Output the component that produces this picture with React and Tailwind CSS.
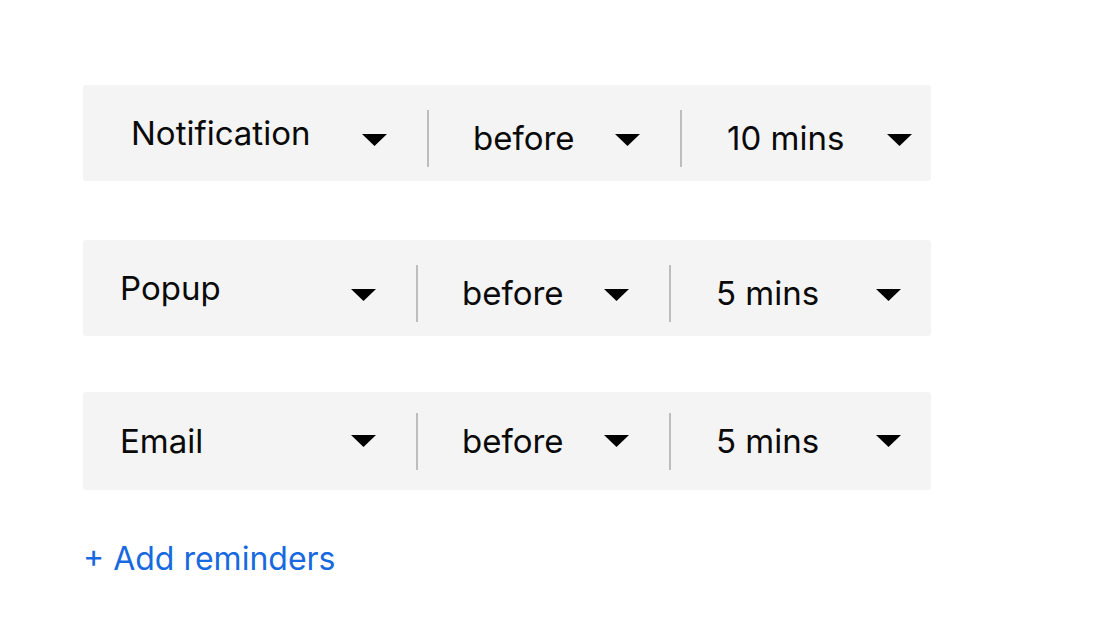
const rows = [
  { type: "Notification", when: "before", time: "10 mins", first: true },
  { type: "Popup", when: "before", time: "5 mins" },
  { type: "Email", when: "before", time: "5 mins", flat: true },
];

const Caret = ({ flat }) => (
  <svg width="25" height="12" viewBox="0 0 25 12" className={`shrink-0 ${flat ? "" : "mt-[4px]"}`}>
    <path d="M0 0 H25 L12.5 12 Z" fill="#000" />
  </svg>
);

const Divider = () => <div className="h-[57px] w-[2px] shrink-0 bg-[#bdbdbd]" />;

const ReminderRow = ({ row, className }) => (
  <div
    className={`flex w-[848px] items-center rounded-[3px] bg-[#f4f4f4] ${
      row.flat ? "h-[98px]" : "h-[96px] pt-[10px]"
    } ${row.first ? "pl-[48px]" : "pl-[37px]"} ${className}`}
  >
    <div className="flex w-[256px] items-center justify-between">
      <span className={`leading-none ${row.flat ? "" : "mb-[10px]"}`}>{row.type}</span>
      <Caret flat={row.flat} />
    </div>
    <div className="mx-[40px]">
      <Divider />
    </div>
    <div className="ml-[4px] flex w-[167px] items-center justify-between">
      <span className="leading-none">{row.when}</span>
      <Caret flat={row.flat} />
    </div>
    <div className="mx-[40px]">
      <Divider />
    </div>
    <div className="ml-[5px] flex w-[185px] items-center justify-between">
      <span className="leading-none">{row.time}</span>
      <Caret flat={row.flat} />
    </div>
  </div>
);

const App = () => {
  return (
    <div className="h-[636px] w-[1100px] bg-white pl-[83px] pt-[85px] font-[Inter,sans-serif] text-[33px] text-[#0a0a0a]">
      <ReminderRow row={rows[0]} />
      <ReminderRow row={rows[1]} className="mt-[59px]" />
      <ReminderRow row={rows[2]} className="mt-[56px]" />
      <button className="mt-[53px] block text-[32px] leading-none text-[#1769e0]">+ Add reminders</button>
    </div>
  );
};

export default App;
